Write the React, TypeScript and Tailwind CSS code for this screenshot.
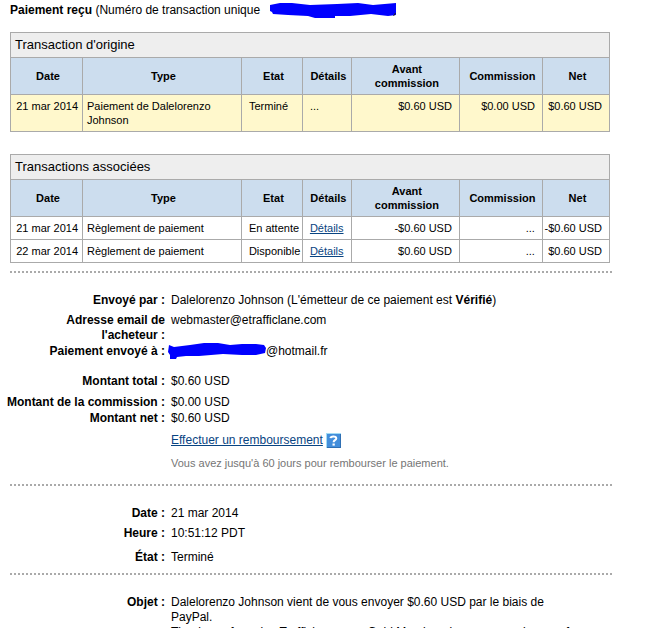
import type { ReactNode } from "react";

type Transaction = {
  date: string;
  type: string;
  etat: string;
  details: boolean;
  avant: string;
  commission: string;
  net: string;
};

const origine: Transaction[] = [
  { date: "21 mar 2014", type: "Paiement de Dalelorenzo Johnson", etat: "Terminé", details: false, avant: "$0.60 USD", commission: "$0.00 USD", net: "$0.60 USD" },
];

const associees: Transaction[] = [
  { date: "21 mar 2014", type: "Règlement de paiement", etat: "En attente", details: true, avant: "-$0.60 USD", commission: "...", net: "-$0.60 USD" },
  { date: "22 mar 2014", type: "Règlement de paiement", etat: "Disponible", details: true, avant: "$0.60 USD", commission: "...", net: "$0.60 USD" },
];

const columns = ["Date", "Type", "Etat", "Détails", "Avant\ncommission", "Commission", "Net"];

function TransactionTable({ title, rows, highlight }: { title: string; rows: Transaction[]; highlight?: boolean }) {
  const cell = "border border-[#aaa] py-1 align-top";
  return (
    <table className="w-full max-w-[600px] table-fixed border-collapse text-[11px] leading-[14px]">
      <colgroup>
        <col className="w-[72px]" />
        <col />
        <col className="w-[61px]" />
        <col className="w-[49px]" />
        <col className="w-[108px]" />
        <col className="w-[83px]" />
        <col className="w-[67px]" />
      </colgroup>
      <thead>
        <tr className="bg-[#eee]">
          <th colSpan={7} className="h-[25px] border border-[#aaa] px-1 text-left text-[13px] font-normal">
            {title}
          </th>
        </tr>
        <tr className="bg-[#cde]">
          {columns.map(c => (
            <th key={c} scope="col" className="h-[37px] border border-[#aaa] pl-[3px] font-bold whitespace-pre-line">
              {c}
            </th>
          ))}
        </tr>
      </thead>
      <tbody className={highlight ? "bg-[#fff8cc]" : "bg-white"}>
        {rows.map(r => (
          <tr key={r.date} className={highlight ? "h-[37px]" : "h-[23px]"}>
            <td className={`${cell} pr-1 text-right whitespace-nowrap`}>{r.date}</td>
            <td className={`${cell} pr-6 pl-1`}>{r.type}</td>
            <td className={`${cell} pl-[7px] whitespace-nowrap`}>{r.etat}</td>
            <td className={`${cell} pl-[7px]`}>
              {r.details ? <a href="#details" className="text-[#084482] underline">Détails</a> : "..."}
            </td>
            <td className={`${cell} pr-[7px] text-right`}>{r.avant}</td>
            <td className={`${cell} pr-[7px] text-right`}>{r.commission}</td>
            <td className={`${cell} pr-[7px] text-right whitespace-nowrap`}>{r.net}</td>
          </tr>
        ))}
      </tbody>
    </table>
  );
}

function Field({ label, children }: { label: string; children: ReactNode }) {
  return (
    <div className="flex gap-[6px]">
      <dt className="w-[159px] shrink-0 text-right font-bold">{label}&nbsp;:</dt>
      <dd className="min-w-0 flex-1">{children}</dd>
    </div>
  );
}

function Separator() {
  return <hr className="border-t-2 border-dotted border-[#aaa]" />;
}

export default function App() {
  return (
    <main
      className="h-screen overflow-hidden bg-white pt-[2px] pr-[37px] pl-[10px] text-[12px] leading-[15px] text-black"
      style={{ fontFamily: '"Liberation Sans", Arial, sans-serif' }}
    >
      <h1 className="mb-[13px] flex h-[17px] items-center gap-2">
        <span>
          <b>Paiement reçu</b> (Numéro de transaction unique
        </span>
        <svg className="ml-[2px] h-[17px] w-[127px]" viewBox="0 0 127 17" aria-hidden="true">
          <path d="M0 3 10 1 22 1 40 3 67 2 88 1 103 3 126 1V13L118 14 101 12 80 14 65 14V16H45L38 14 18 13 3 12 2 10 0 9Z" fill="#00f" />
          <path d="M125.500 11 123.500 14" stroke="#222" />
        </svg>
      </h1>

      <TransactionTable title="Transaction d'origine" rows={origine} highlight />
      <div className="mt-[22px] mb-2">
        <TransactionTable title="Transactions associées" rows={associees} />
      </div>
      <Separator />

      <dl className="mt-5 -ml-1">
        <Field label="Envoyé par">
          Dalelorenzo Johnson (L'émetteur de ce paiement est <b>Vérifié</b>)
        </Field>
        <div className="mt-[5px]">
          <Field label="Adresse email de l'acheteur">webmaster@etrafficlane.com</Field>
        </div>
        <div className="mt-px">
          <Field label="Paiement envoyé à">
            <span className="-ml-[3px] flex">
              <svg className="-my-px h-[17px] w-[98px]" viewBox="0 0 98 17" aria-hidden="true">
                <path d="M1 2 6 4 22 2 36 0 50 0 62 2 74 1 88 1 96 2 98 5 97 10 88 12 74 12 55 11 43 12 31 13 18 13 9 14 8 16H2V12L0 9Z" fill="#00f" />
              </svg>
              @hotmail.fr
            </span>
          </Field>
        </div>
        <div className="mt-[15px]">
          <Field label="Montant total">$0.60 USD</Field>
        </div>
        <div className="mt-[6px]">
          <Field label="Montant de la commission">$0.00 USD</Field>
        </div>
        <div className="mt-px">
          <Field label="Montant net">$0.60 USD</Field>
        </div>
      </dl>

      <div className="mt-[7px] mb-[13px] ml-[161px]">
        <div className="flex gap-[3px]">
          <a href="#remboursement" className="text-[#084482] underline">Effectuer un remboursement</a>
          <button type="button" aria-label="Aide" className="h-[15px] w-[15px]">
            <svg viewBox="0 0 15 15" className="h-full w-full">
              <path d="M0 0H15V15H0Z" fill="#a3dcf5" />
              <path d="M1 1H15V15H1Z" fill="#2f6fb3" />
              <path d="M1 1H14V14H1Z" fill="#438edb" />
              <path d="M4.500 5.200C4.700 3 10.300 2.600 10.300 5.300 10.300 7.300 7.600 7 7.600 9.200" fill="none" stroke="#fff" strokeWidth="2" />
              <path d="M6.500 10.500H8.800V12.600H6.500Z" fill="#fff" />
            </svg>
          </button>
        </div>
        <p className="mt-2 text-[11px] text-[#757575]">Vous avez jusqu'à 60 jours pour rembourser le paiement.</p>
      </div>
      <Separator />

      <dl className="mt-5 mb-2 -ml-1">
        <Field label="Date">21 mar 2014</Field>
        <div className="mt-[5px]">
          <Field label="Heure">10:51:12 PDT</Field>
        </div>
        <div className="mt-[9px]">
          <Field label="État">Terminé</Field>
        </div>
      </dl>
      <Separator />

      <dl className="mt-5 -ml-1">
        <Field label="Objet">
          <p className="max-w-[400px]">Dalelorenzo Johnson vient de vous envoyer $0.60 USD par le biais de PayPal.</p>
          <p className="whitespace-nowrap">Thank you for using Trafficlane.com. Gold Member signup access in one of</p>
        </Field>
      </dl>
    </main>
  );
}
